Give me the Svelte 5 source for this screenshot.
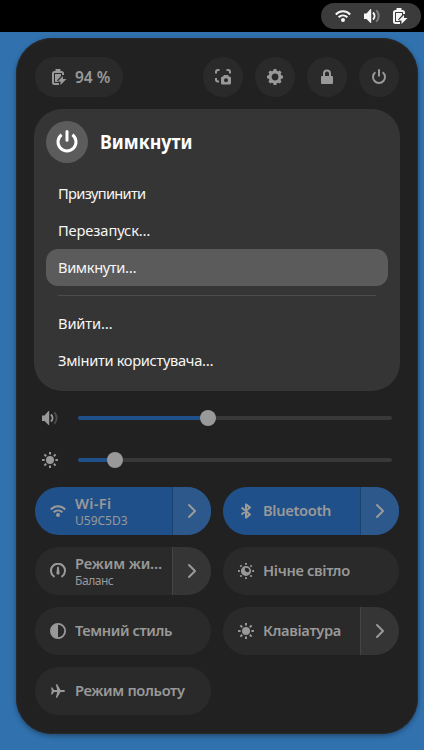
<script>
  const actions = ['screenshot', 'settings', 'lock', 'power'];
  const session = [
    { label: 'Призупинити', fit: -0.7 },
    { label: 'Перезапуск…', fit: -0.12 },
    { label: 'Вимкнути…', fit: -0.38, active: true },
    { divider: true },
    { label: 'Вийти…', fit: -0.15 },
    { label: 'Змінити користувача…', fit: -0.33 }
  ];
  const sliders = [
    { icon: 'volume', value: 130 },
    { icon: 'sun', value: 37 }
  ];
  const tiles = [
    { icon: 'wifi', label: 'Wi-Fi', fit: 0.35, sub: 'U59C5D3', subFit: 0, on: true, more: true },
    { icon: 'bluetooth', label: 'Bluetooth', fit: -0.33, on: true, more: true },
    { icon: 'gauge', label: 'Режим жи…', fit: -0.12, sub: 'Баланс', subFit: -0.45, more: true },
    { icon: 'night', label: 'Нічне світло', fit: -0.35 },
    { icon: 'contrast', label: 'Темний стиль', fit: -0.42 },
    { icon: 'sun', label: 'Клавіатура', fit: -0.33, more: true },
    { icon: 'plane', label: 'Режим польоту', fit: -0.33 }
  ];
  const rays = [0, 45, 90, 135, 180, 225, 270, 315];
</script>

{#snippet icon(name, size = 16)}
  <svg width={size} height={size} viewBox="0 0 16 16" fill="none" stroke="currentColor" stroke-width="2">
    {#if name === 'wifi'}
      <path d="M.8 6.5C5 2.3 11 2.3 15.2 6.5M3.6 9.3c2.6-2.5 6.2-2.5 8.8 0" />
      <circle cx="8" cy="12" r="2" fill="currentColor" stroke="none" />
    {:else if name === 'volume'}
      <path d="M0 5.500h2.500L6.500 1h.7v14h-.7l-4-4H0z" fill="currentColor" stroke="none" />
      <path d="M9 4.500c2 2 2 5 0 7" />
      <path d="M12.200 2.200c3.300 3.300 3.300 8.300 0 11.600" opacity=".35" />
    {:else if name === 'battery'}
      <path d="M8 15H3.500A1.500 1.500 0 0 1 2 13.500V4.500A1.500 1.500 0 0 1 3.500 3h7A1.500 1.500 0 0 1 12 4.500V6" />
      <path d="M4.500 0h5v3h-5zM4 5h6v2l-4 4.500L7.500 13H4z" fill="currentColor" stroke="none" />
      <path d="M12 7 6.500 12.500H9.500V16L15.500 10H12z" fill="currentColor" stroke="none" />
    {:else if name === 'screenshot'}
      <path d="M1 4.500V3A2 2 0 0 1 3 1h1.500M11.500 1H13a2 2 0 0 1 2 2v1.500M1 9v1.500a2 2 0 0 0 2 2h1" />
      <path fill="currentColor" stroke="none" fill-rule="evenodd" d="M8 7.500 9 6h4l1 1.500h.5A1.500 1.500 0 0 1 16 9v5a1.500 1.500 0 0 1-1.500 1.500h-7A1.500 1.500 0 0 1 6 14V9a1.500 1.500 0 0 1 1.500-1.500zm3 1.800a2 2 0 1 0 0 4 2 2 0 0 0 0-4" />
    {:else if name === 'settings'}
      <circle cx="8" cy="8" r="4.900" stroke-width="3" />
      {#each rays as angle}
        <path d="M6 2.500 6.700 0h2.600l.7 2.500z" fill="currentColor" stroke="none" transform="rotate({angle} 8 8)" />
      {/each}
    {:else if name === 'lock'}
      <path d="M5 8V4.500a3 3 0 0 1 6 0V8" />
      <rect x="2" y="7" width="12" height="8" rx="1" fill="currentColor" stroke="none" />
    {:else if name === 'power'}
      <path d="M4.400 3.200a6 6 0 1 0 7.200 0" />
      <path d="M8 1v5.800" stroke-linecap="round" />
    {:else if name === 'sun'}
      <circle cx="8" cy="8" r="4" fill="currentColor" stroke="none" />
      {#each rays as angle}
        <path d="M8 .1v2.500" transform="rotate({angle} 8 8)" />
      {/each}
    {:else if name === 'night'}
      <circle cx="8" cy="8" r="4.200" stroke-width="1.800" />
      <path d="M7.800 4.500A2.600 2.600 0 0 0 11.300 8.500 3.800 3.800 0 1 1 7.800 4.500" fill="currentColor" stroke="none" />
      {#each rays as angle}
        <path d="M8 0v1.800" transform="rotate({angle} 8 8)" />
      {/each}
    {:else if name === 'bluetooth'}
      <path d="M3.500 4.400 12 11.400 8 14.600V1.400l4 3.200-8.500 7" stroke-width="2" stroke-linejoin="round" />
    {:else if name === 'gauge'}
      <path d="M3.800 14.200V13.300A7 7 0 1 1 12.200 13.300v.9" />
      <path d="M7.200 3.800h1.600l.7 5.700a1.600 1.600 0 1 1-3 0z" fill="currentColor" stroke="none" />
    {:else if name === 'contrast'}
      <circle cx="8" cy="8" r="7.100" stroke-width="1.800" />
      <path d="M8 1a7 7 0 0 0 0 14z" fill="currentColor" stroke="none" />
    {:else if name === 'plane'}
      <path d="M1 4.500h1.200L4.200 7.100h3L5.800 1.200h1.400L10.500 7.100h3.300c1.700.2 1.700 1.600 0 1.800h-3.300L7.200 14.800H5.800L7.200 8.900h-3l-2 2.600H1L1.800 8z" fill="currentColor" stroke="none" />
    {:else if name === 'chevron'}
      <path d="m5 2 6 6-6 6" stroke-linecap="round" stroke-linejoin="round" />
    {/if}
  </svg>
{/snippet}

<main class="desktop">
  <header class="topbar">
    <div class="status">
      {@render icon('wifi')}
      {@render icon('volume')}
      {@render icon('battery')}
    </div>
  </header>

  <section class="panel">
    <div class="toolbar">
      <div class="charge">{@render icon('battery')}<span>94 %</span></div>
      {#each actions as name}
        <button class="round" aria-label={name}>{@render icon(name)}</button>
      {/each}
    </div>

    <div class="card">
      <div class="card-head">
        <span class="badge">{@render icon('power', 24)}</span>
        <h1>Вимкнути</h1>
      </div>
      {#each session as row}
        {#if row.divider}
          <div class="divider"></div>
        {:else}
          <div class="item" class:active={row.active}>
            <span style="letter-spacing: {row.fit}px">{row.label}</span>
          </div>
        {/if}
      {/each}
    </div>

    <div class="sliders">
      {#each sliders as s}
        <div class="slider">
          {@render icon(s.icon)}
          <div class="track">
            <div class="fill" style="width: {s.value}px"></div>
            <div class="knob"></div>
          </div>
        </div>
      {/each}
    </div>

    <div class="tiles">
      {#each tiles as t}
        <div class="tile" class:on={t.on}>
          <div class="main">
            {@render icon(t.icon)}
            <div class="text">
              <span class="label" style="letter-spacing: {t.fit}px">{t.label}</span>
              {#if t.sub}<span class="sub" style="letter-spacing: {t.subFit}px">{t.sub}</span>{/if}
            </div>
          </div>
          {#if t.more}<div class="more">{@render icon('chevron')}</div>{/if}
        </div>
      {/each}
    </div>
  </section>
</main>

<style>
  .desktop {
    width: 424px;
    height: 750px;
    overflow: hidden;
    background: #3071ae;
    color: #999;
    font-family: 'Noto Sans', sans-serif;
    font-size: 14.667px;
  }
  .desktop :global(*) { box-sizing: border-box; }
  svg { display: block; flex: none; }
  .topbar {
    height: 32px;
    background: #000;
    display: flex;
    justify-content: flex-end;
    padding: 3px 3px 3px 0;
  }
  .status {
    width: 100px;
    height: 26px;
    border-radius: 13px;
    background: #3b3b3b;
    color: #f6f6f6;
    display: flex;
    align-items: center;
    gap: 12.5px;
    padding-left: 14px;
  }
  .panel {
    width: 402px;
    height: 696px;
    margin: 6px 0 0 16px;
    padding: 19px 18px;
    border-radius: 36px;
    background: #212121;
    box-shadow: 0 2px 5px rgba(0, 0, 0, .35), inset 0 0 0 1px #292929;
  }
  .toolbar {
    display: flex;
    gap: 12px;
    padding: 0 1px;
    margin-bottom: 12px;
  }
  .charge {
    width: 88px;
    height: 40px;
    margin-right: auto;
    padding-left: 16px;
    border-radius: 20px;
    background: #2a2a2a;
    display: flex;
    align-items: center;
    gap: 8px;
    font-weight: 600;
    white-space: nowrap;
  }
  .charge span { padding-bottom: 1px; font-size: 15.5px; }
  .round {
    width: 40px;
    height: 40px;
    padding: 0;
    border: 0;
    border-radius: 50%;
    background: #2a2a2a;
    color: inherit;
    display: grid;
    place-items: center;
  }
  .card {
    height: 282px;
    padding: 12px;
    border-radius: 28px;
    background: #353535;
    color: #fff;
  }
  .card-head {
    display: flex;
    align-items: center;
    gap: 12px;
    height: 42px;
    margin-bottom: 12px;
  }
  .badge {
    width: 42px;
    height: 42px;
    border-radius: 50%;
    background: #5c5c5c;
    display: grid;
    place-items: center;
  }
  h1 {
    margin: 0;
    padding-bottom: 1px;
    font-size: 20px;
    line-height: 41px;
    font-weight: 700;
    transform: scaleX(.89);
    transform-origin: left;
  }
  .item {
    height: 37px;
    padding: 0 12px;
    border-radius: 12px;
    line-height: 37px;
    white-space: nowrap;
    color: #f6f6f6;
  }
  .item.active { background: #5b5b5b; }
  .divider { height: 1px; margin: 9px 12px; background: #4c4c4c; }
  .sliders { margin-top: 6px; }
  .slider {
    height: 42px;
    display: flex;
    align-items: center;
    gap: 20px;
    padding: 0 8px;
  }
  .track {
    flex: 1;
    height: 4px;
    border-radius: 2px;
    background: #383838;
    display: flex;
    align-items: center;
  }
  .fill { height: 4px; border-radius: 2px; background: #20508a; }
  .knob { width: 16px; height: 16px; margin-left: -8px; border-radius: 50%; background: #999; }
  .tiles {
    margin: 6px 1px 0;
    display: grid;
    grid-template-columns: 176px 176px;
    gap: 12px;
  }
  .tile {
    height: 48px;
    border-radius: 24px;
    background: #2a2a2a;
    display: flex;
    overflow: hidden;
  }
  .main {
    flex: 1;
    min-width: 0;
    display: flex;
    align-items: center;
    gap: 9px;
    padding-left: 15px;
  }
  .text { display: flex; flex-direction: column; white-space: nowrap; }
  .label { font-weight: 600; line-height: 19px; }
  .label:only-child { padding-bottom: 1px; }
  .sub { font-size: 12px; line-height: 15px; }
  .more {
    width: 39px;
    background: #353535;
    border-left: 1px solid #454545;
    display: grid;
    place-items: center;
  }
  .on { background: #20508a; }
  .on .more { background: #2d588c; border-left-color: #1b426f; }
</style>
